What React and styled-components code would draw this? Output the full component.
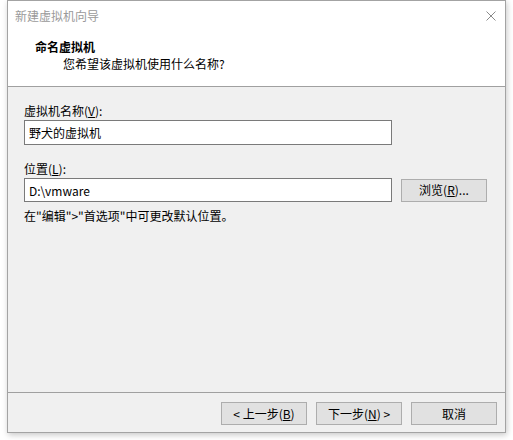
import React from "react";
import styled, { createGlobalStyle } from "styled-components";

const GlobalStyle = createGlobalStyle`
    html, body {
        margin: 0;
        padding: 0;
        background: #ffffff;
    }
    body {
        font-family: "Noto Sans CJK SC", "Microsoft YaHei", sans-serif;
        font-size: 12px;
        color: #000;
    }
`;

const Page = styled.div`
    width: 513px;
    height: 440px;
    padding-left: 7px;
    box-sizing: border-box;
`;

const Window = styled.div`
    width: 499px;
    height: 433px;
    box-sizing: border-box;
    border: 1px solid #a3a3a3;
    background: #f0f0f0;
    display: flex;
    flex-direction: column;
    box-shadow: 1px 2px 6px rgba(0, 0, 0, 0.22);
`;

const TitleBar = styled.div`
    height: 29px;
    display: flex;
    align-items: center;
    justify-content: space-between;
    padding: 0 9px 0 7px;
    background: #fff;
`;

const Title = styled.span`
    color: #9a9a9a;
    font-size: 12px;
`;

const Close = styled.svg`
    width: 10px;
    height: 10px;
`;

const Header = styled.div`
    height: 57px;
    background: #fff;
    border-bottom: 1px solid #a0a0a0;
    display: flex;
    flex-direction: column;
    padding: 8px 0 0 27px;
    box-sizing: border-box;
`;

const Heading = styled.div`
    font-weight: bold;
    line-height: 17px;
`;

const SubHeading = styled.div`
    padding-left: 28px;
    line-height: 17px;
`;

const Body = styled.div`
    flex: 1;
    padding: 15px 16px 0 16px;
    display: flex;
    flex-direction: column;
`;

const Label = styled.div`
    line-height: 17px;
    margin-top: ${({ $top }) => $top || 0}px;
`;

const Key = styled.span`
    text-decoration: underline;
`;

const Row = styled.div`
    display: flex;
    align-items: center;
    gap: 9px;
    margin-top: 1px;
`;

const Input = styled.div`
    width: 368px;
    height: ${({ $h }) => $h || 25}px;
    box-sizing: border-box;
    border: 1px solid #7a7a7a;
    background: #fff;
    display: flex;
    align-items: center;
    padding-left: 4px;
`;

const Button = styled.div`
    width: 86px;
    height: 23px;
    box-sizing: border-box;
    border: 1px solid #adadad;
    background: #e1e1e1;
    display: flex;
    align-items: center;
    justify-content: center;
    line-height: 1;
`;

const Hint = styled.div`
    line-height: 17px;
    margin-top: 5px;
`;

const Footer = styled.div`
    height: 40px;
    border-top: 1px solid #a0a0a0;
    box-sizing: border-box;
    display: flex;
    justify-content: flex-end;
    align-items: flex-start;
    gap: 9px;
    padding: 9px 8px 0 0;
`;

function App() {
    return (
        <Page>
            <GlobalStyle />
            <Window>
                <TitleBar>
                    <Title>新建虚拟机向导</Title>
                    <Close viewBox="0 0 10 10">
                        <path d="M0.5 0.5 L9.5 9.5 M9.5 0.5 L0.5 9.5" stroke="#8a8a8a" strokeWidth="1" fill="none" />
                    </Close>
                </TitleBar>
                <Header>
                    <Heading>命名虚拟机</Heading>
                    <SubHeading>您希望该虚拟机使用什么名称?</SubHeading>
                </Header>
                <Body>
                    <Label>
                        虚拟机名称(<Key>V</Key>):
                    </Label>
                    <Row>
                        <Input>野犬的虚拟机</Input>
                    </Row>
                    <Label $top={15}>
                        位置(<Key>L</Key>):
                    </Label>
                    <Row>
                        <Input $h={24}>D:\vmware</Input>
                        <Button>
                            浏览(<Key>R</Key>)...
                        </Button>
                    </Row>
                    <Hint>在"编辑">"首选项"中可更改默认位置。</Hint>
                </Body>
                <Footer>
                    <Button>
                        &lt; 上一步(<Key>B</Key>)
                    </Button>
                    <Button>
                        下一步(<Key>N</Key>) &gt;
                    </Button>
                    <Button>取消</Button>
                </Footer>
            </Window>
        </Page>
    );
}

export default App;
